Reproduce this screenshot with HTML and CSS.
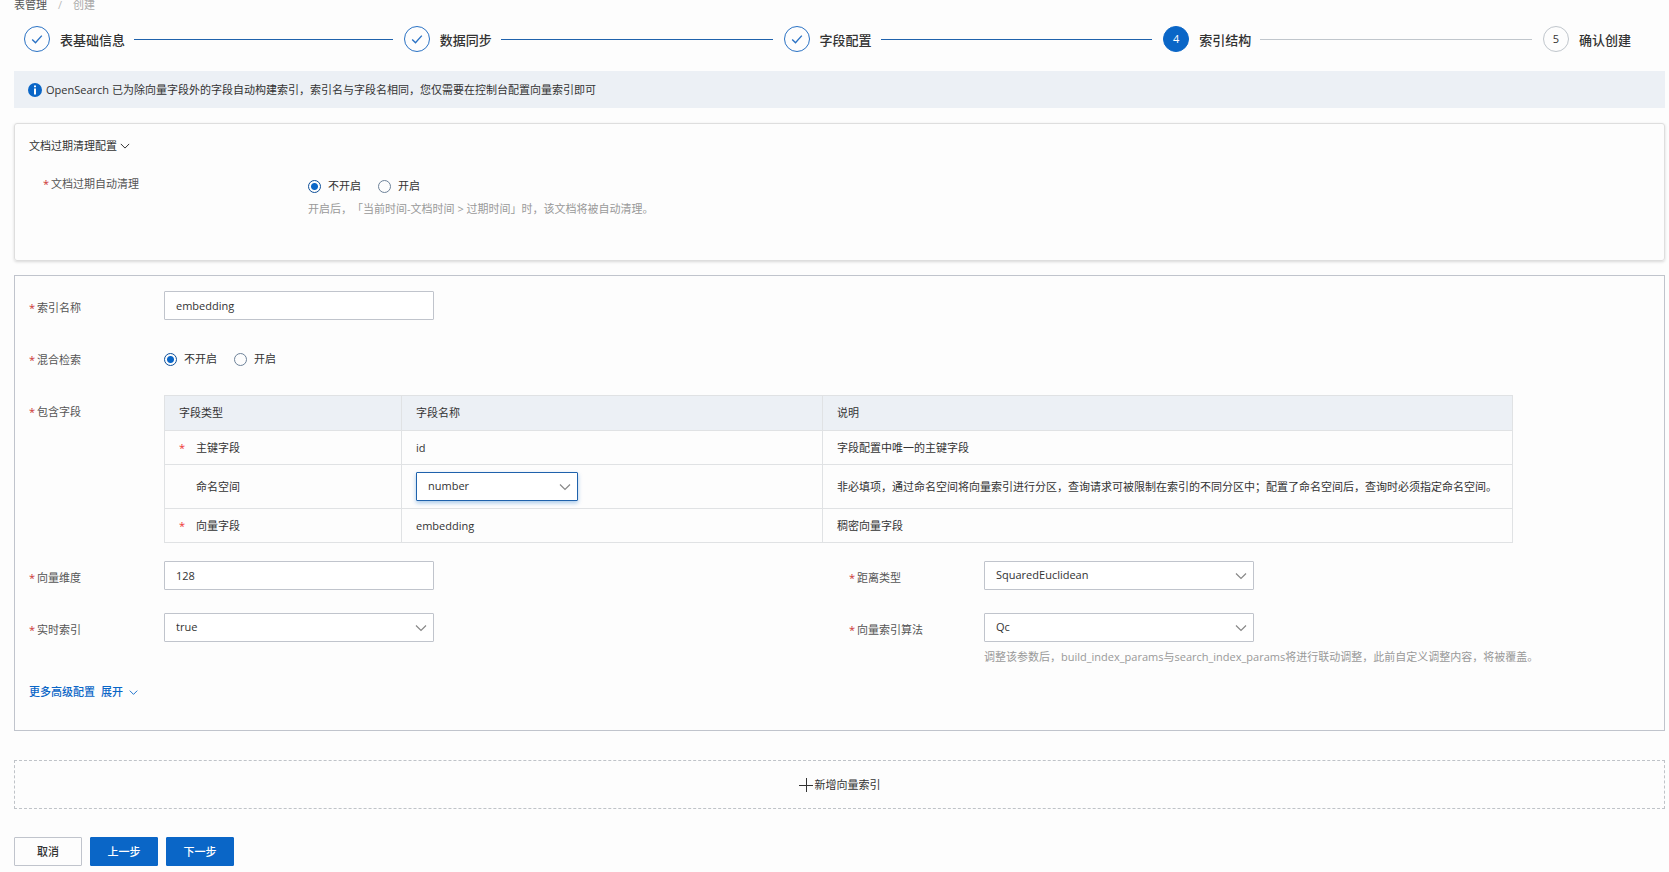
FILE: index.html
```html
<!DOCTYPE html>
<html lang="zh-CN">
<head>
<meta charset="utf-8">
<meta name="viewport" content="width=device-width, initial-scale=1">
<title>表管理 / 创建</title>
<link rel="stylesheet" href="styles.css">
</head>
<body>
<svg class="sprite" aria-hidden="true">
  <symbol id="chevron" viewBox="0 0 12 12"><path d="M1 3.5l5 5 5-5" fill="none" stroke="currentColor" stroke-width="1.2"/></symbol>
  <symbol id="check" viewBox="0 0 12 12"><path d="M1.2 6.4l3.3 3.4L10.8 2.6" fill="none" stroke="currentColor" stroke-width="1.4"/></symbol>
</svg>

<nav class="breadcrumb" aria-label="breadcrumb">
  <a href="#">表管理</a><span class="slash">/</span><span class="current">创建</span>
</nav>

<ol class="steps">
  <li class="step done"><span class="dot"><svg class="icon"><use href="#check"/></svg></span><span class="step-name">表基础信息</span><span class="line"></span></li>
  <li class="step done"><span class="dot"><svg class="icon"><use href="#check"/></svg></span><span class="step-name">数据同步</span><span class="line"></span></li>
  <li class="step done"><span class="dot"><svg class="icon"><use href="#check"/></svg></span><span class="step-name">字段配置</span><span class="line"></span></li>
  <li class="step active"><span class="dot">4</span><span class="step-name">索引结构</span><span class="line"></span></li>
  <li class="step"><span class="dot">5</span><span class="step-name">确认创建</span></li>
</ol>

<main class="content">
  <div class="notice">
    <svg class="notice-icon" viewBox="0 0 14 14" aria-hidden="true"><circle cx="7" cy="7" r="7" fill="#0a66c7"/><path d="M6 2.4h2v1.8H6zM6 5.4h2v6H6z" fill="#fff"/></svg>
    <span>OpenSearch 已为除向量字段外的字段自动构建索引，索引名与字段名相同，您仅需要在控制台配置向量索引即可</span>
  </div>

  <section class="card expiry">
    <button class="toggle" type="button">文档过期清理配置<svg class="icon"><use href="#chevron"/></svg></button>
    <div class="expiry-row">
      <span class="label" id="expiry-label">文档过期自动清理</span>
      <div>
        <div class="radios" role="radiogroup" aria-labelledby="expiry-label">
          <label><input type="radio" name="expiry" checked>不开启</label>
          <label><input type="radio" name="expiry">开启</label>
        </div>
        <p class="help">开启后，「当前时间-文档时间 &gt; 过期时间」时，该文档将被自动清理。</p>
      </div>
    </div>
  </section>

  <section class="card index">
    <div class="field">
      <label class="label" for="index-name">索引名称</label>
      <input class="control" id="index-name" type="text" value="embedding">
    </div>
    <div class="field">
      <span class="label" id="hybrid-label">混合检索</span>
      <div class="radios" role="radiogroup" aria-labelledby="hybrid-label">
        <label><input type="radio" name="hybrid" checked>不开启</label>
        <label><input type="radio" name="hybrid">开启</label>
      </div>
    </div>
    <div class="field table-field">
      <span class="label" id="fields-label">包含字段</span>
      <table class="fields" aria-labelledby="fields-label">
        <colgroup><col class="col-type"><col class="col-name"><col></colgroup>
        <thead>
          <tr><th>字段类型</th><th>字段名称</th><th>说明</th></tr>
        </thead>
        <tbody>
          <tr><td><span class="kind required">主键字段</span></td><td>id</td><td>字段配置中唯一的主键字段</td></tr>
          <tr class="tall"><td><span class="kind">命名空间</span></td>
            <td><span class="select focused"><select class="control" aria-label="命名空间"><option>number</option></select><svg class="icon"><use href="#chevron"/></svg></span></td>
            <td>非必填项，通过命名空间将向量索引进行分区，查询请求可被限制在索引的不同分区中；配置了命名空间后，查询时必须指定命名空间。</td></tr>
          <tr><td><span class="kind required">向量字段</span></td><td>embedding</td><td>稠密向量字段</td></tr>
        </tbody>
      </table>
    </div>
    <div class="pair">
      <div class="field">
        <label class="label" for="dimension">向量维度</label>
        <input class="control" id="dimension" type="text" value="128">
      </div>
      <div class="field">
        <label class="label" for="distance">距离类型</label>
        <span class="select"><select class="control" id="distance"><option>SquaredEuclidean</option></select><svg class="icon"><use href="#chevron"/></svg></span>
      </div>
      <div class="field">
        <label class="label" for="realtime">实时索引</label>
        <span class="select"><select class="control" id="realtime"><option>true</option></select><svg class="icon"><use href="#chevron"/></svg></span>
      </div>
      <div class="field">
        <label class="label" for="algorithm">向量索引算法</label>
        <div>
          <span class="select"><select class="control" id="algorithm"><option>Qc</option></select><svg class="icon"><use href="#chevron"/></svg></span>
          <p class="help">调整该参数后，build_index_params与search_index_params将进行联动调整，此前自定义调整内容，将被覆盖。</p>
        </div>
      </div>
    </div>
    <button class="more" type="button"><span>更多高级配置</span><span>展开</span><svg class="icon"><use href="#chevron"/></svg></button>
  </section>

  <button class="add" type="button"><svg class="plus" viewBox="0 0 14 14" aria-hidden="true"><path d="M7.5 0v14M0 7.5h14" stroke="currentColor"/></svg>新增向量索引</button>

  <div class="actions">
    <button class="btn" type="button">取消</button>
    <button class="btn primary" type="button">上一步</button>
    <button class="btn primary" type="button">下一步</button>
  </div>
</main>
</body>
</html>
```

FILE: styles.css
```css
* { box-sizing: border-box; }

body {
  margin: 0;
  background: #fdfdfd;
  color: #333;
  font: 11px/16px "Open Sans", "Noto Sans CJK SC", sans-serif;
  text-spacing-trim: space-all;
}

button, input, select { font: inherit; color: inherit; }
button { background: none; border: 0; padding: 0; cursor: pointer; }
p { margin: 0; }

.sprite { display: none; }
.icon { width: 12px; height: 12px; flex: none; }

.breadcrumb {
  display: flex;
  gap: 11px;
  height: 16px;
  padding-left: 14px;
  line-height: 10px;
}
.breadcrumb a { color: #555; text-decoration: none; }
.slash { color: #bbb; }
.current { color: #aaa; }

.steps {
  display: flex;
  margin: 0;
  padding: 10px 37px 0 24px;
  list-style: none;
}
.step { display: flex; align-items: center; }
.step:not(:last-child) { flex: 1; }
.dot {
  display: flex;
  align-items: center;
  justify-content: center;
  width: 26px;
  height: 26px;
  border: 1px solid #c0c6cc;
  border-radius: 50%;
}
.done .dot { border-color: #2a72c4; color: #2a72c4; }
.active .dot { border-color: #0a66c7; background: #0a66c7; color: #fff; }
.step-name {
  padding: 2px 9px 0 10px;
  font-size: 13px;
  font-weight: 500;
}
.step:last-child .step-name { padding-right: 1px; }
.line { flex: 1; height: 1px; margin-right: 11px; background: #c0c6cc; }
.done .line { background: #1f62ac; }

.content { padding: 19px 4px 0 14px; }

.notice {
  display: flex;
  align-items: center;
  gap: 4px;
  height: 37px;
  padding-left: 14px;
  background: #ecf0f5;
}
.notice-icon { width: 14px; height: 14px; }

.card { margin-top: 15px; border: 1px solid #c0c4cc; }

.expiry {
  padding: 14px 14px 43px;
  border-color: #dedede;
  border-radius: 3px;
  box-shadow: 0 1px 3px rgba(0, 0, 0, .15);
}
.toggle { display: flex; align-items: center; gap: 3px; }
.toggle .icon { width: 10px; }
.expiry-row {
  display: grid;
  grid-template-columns: 265px 1fr;
  margin-top: 22px;
  padding-left: 14px;
}

.label { color: #555; }
.label::before { content: "*"; margin-right: 2px; color: #c33; }

.radios { display: flex; gap: 17px; padding-top: 2px; }
.radios label { display: flex; align-items: center; }
.radios input {
  appearance: none;
  width: 13px;
  height: 13px;
  margin: 0 7px 0 0;
  border: 1px solid #6d8299;
  border-radius: 50%;
}
.radios input:checked {
  border-color: #0d4f99;
  background: radial-gradient(circle, #0a66c7 3px, transparent 4px);
}
.help { color: #999; white-space: nowrap; }
.expiry .help { margin-top: 7px; }

.index { margin-top: 14px; padding: 15px 0 30px 14px; }
.field {
  display: grid;
  grid-template-columns: 135px 1fr;
  align-items: start;
  min-height: 52px;
}
.field > .label { padding-top: 9px; }
.field > .radios { padding-top: 8px; }

.control {
  width: 270px;
  height: 29px;
  padding: 0 11px 1px;
  border: 1px solid #c0c4cc;
  border-radius: 1px;
  background: #fff;
}
.select {
  display: inline-grid;
  align-items: center;
  justify-self: start;
  vertical-align: top;
}
.select .control { grid-area: 1 / 1; appearance: none; }
.select .icon {
  grid-area: 1 / 1;
  justify-self: end;
  margin-right: 7px;
  color: #888;
  pointer-events: none;
}
.focused .control {
  width: 162px;
  border-color: #1f62ac;
  box-shadow: 0 2px 4px rgba(10, 102, 199, .35);
}

.table-field { margin-bottom: 18px; padding-right: 151px; }
.fields {
  width: 100%;
  border-collapse: collapse;
  table-layout: fixed;
}
.col-type { width: 237px; }
.col-name { width: 421px; }
.fields th, .fields td {
  height: 34px;
  padding: 0 14px;
  border: 1px solid #e0e2e4;
  font-weight: 400;
  text-align: left;
  white-space: nowrap;
}
.fields th { height: 35px; background: #ecf0f5; }
.fields .tall td { height: 44px; }
.kind { display: flex; }
.kind::before { content: ""; width: 17px; }
.kind.required::before { content: "*"; color: #e33; }

.pair {
  display: grid;
  grid-template-columns: 1fr 1fr;
  column-gap: 5px;
}
.pair .help { margin-top: 7px; }

.more {
  display: flex;
  align-items: center;
  gap: 6px;
  margin-top: 19px;
  color: #0a66c7;
  font-weight: 500;
}
.more .icon { width: 9px; height: 9px; }

.add {
  display: flex;
  align-items: center;
  justify-content: center;
  gap: 2px;
  width: 100%;
  height: 49px;
  margin-top: 29px;
  border: 1px dashed #bfc3c8;
}
.plus { width: 14px; height: 14px; }

.actions { display: flex; gap: 8px; margin-top: 28px; }
.btn {
  width: 68px;
  height: 29px;
  border: 1px solid #c0c4cc;
  border-radius: 1px;
  font-weight: 500;
}
.primary { border-color: #0a66c7; background: #0a66c7; color: #fff; }
```
